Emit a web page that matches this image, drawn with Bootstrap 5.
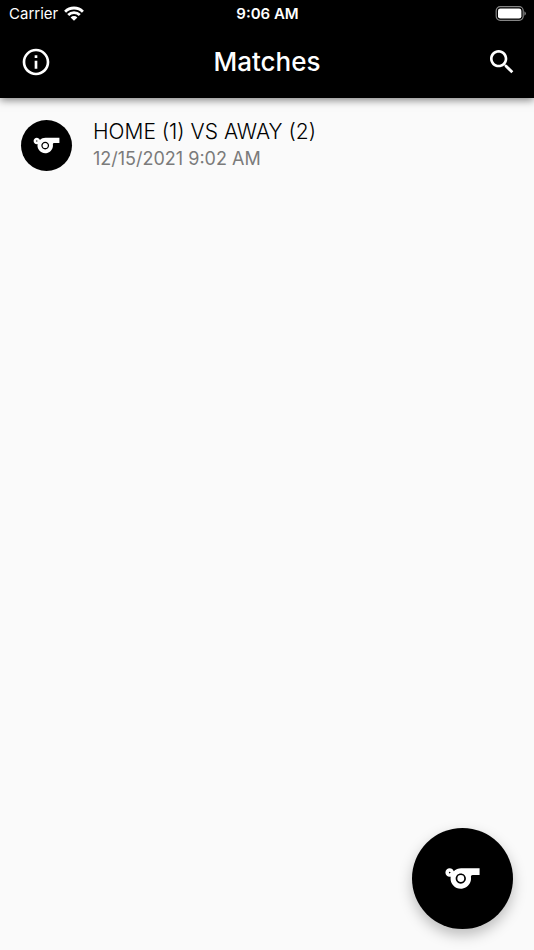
<!DOCTYPE html>
<html lang="en">
<head>
<meta charset="utf-8">
<meta name="viewport" content="width=device-width, initial-scale=1">
<title>Matches</title>
<link href="https://cdn.jsdelivr.net/npm/bootstrap@5.3.0/dist/css/bootstrap.min.css" rel="stylesheet">
<style>
body { background: #fafafa; font-family: Inter, "Liberation Sans", sans-serif; color: #212121; }
svg { display: block; fill: currentColor; }
.app-header { background: #000; color: #fff; box-shadow: 0 2px 8px rgba(0,0,0,.5); }
.status-bar { height: 27px; padding: 0 8px; font-size: 15px; line-height: 27px; }
.carrier { padding-left: 1px; }
.status-time { font-weight: 600; }
.app-bar { height: 71px; padding: 0 12px 2px; }
.app-title { font-size: 26px; line-height: 30px; font-weight: 500; }
.icon-btn { width: 40px; height: 40px; color: #fff; border: 0; }
.icon-btn-wide { width: 48px; }
.match-item { padding: 20px 21px; gap: 21px; color: #000; }
.avatar { width: 51px; height: 51px; background: #000; color: #fff; }
.match-name { font-size: 21px; line-height: 28px; font-weight: 300; }
.match-date { font-size: 18px; line-height: 26px; color: #7b7b7b; }
.fab { width: 101px; height: 101px; margin: 21px; background: #000; color: #fff; border: 0; box-shadow: 0 6px 14px rgba(0,0,0,.25); }
</style>
<script src="https://cdn.jsdelivr.net/npm/bootstrap@5.3.0/dist/js/bootstrap.bundle.min.js" defer></script>
</head>
<body>
<svg class="d-none" aria-hidden="true">
  <symbol id="whistle" viewBox="0 0 24 24">
    <path d="M11.23,6c-1.66,0-3.22,0.66-4.36,1.73C6.54,6.73,5.61,6,4.5,6C3.12,6,2,7.12,2,8.5S3.12,11,4.5,11c0.21,0,0.41-0.03,0.61-0.08c-0.05,0.25-0.09,0.51-0.1,0.78c-0.18,3.68,2.95,6.68,6.68,6.27c2.55-0.28,4.68-2.26,5.19-4.77c0.15-0.71,0.15-1.4,0.06-2.06c-0.09-0.6,0.38-1.13,0.99-1.13H22V6H11.23z M4.5,9C4.22,9,4,8.78,4,8.5S4.22,8,4.5,8S5,8.22,5,8.5S4.78,9,4.5,9z M11,15c-1.66,0-3-1.34-3-3s1.34-3,3-3s3,1.34,3,3S12.66,15,11,15z"/>
    <circle cx="11" cy="12" r="2"/>
  </symbol>
</svg>
<div class="d-flex flex-column min-vh-100">
  <header class="app-header">
    <div class="status-bar row g-0 align-items-center">
      <div class="carrier col d-flex align-items-center gap-1">
        <span>Carrier</span>
        <svg width="23" height="16" viewBox="0 0 23 16" role="img" aria-label="Wi-Fi"><g fill="none" stroke="currentColor" stroke-width="2.8"><path d="M3.1 5.7a12.6 12.6 0 0 1 17.8 0"/><path d="M6.2 9.1a8.2 8.2 0 0 1 11.6 0"/></g><path d="M12 14.7L8.6 11.4a4.8 4.8 0 0 1 6.8 0z"/></svg>
      </div>
      <div class="col-auto status-time">9:06 AM</div>
      <div class="col d-flex justify-content-end">
        <svg width="31" height="15" viewBox="0 0 31 15" role="img" aria-label="Battery full"><rect x="1.2" y=".7" width="27" height="13.6" rx="4" fill="none" stroke="#858585" stroke-width="1.2"/><rect x="3" y="2.5" width="23.4" height="10" rx="2.3"/><path d="M29.4 5.2q1.5.7 1.5 2.3t-1.5 2.3z" fill="#858585"/></svg>
      </div>
    </div>
    <nav class="app-bar row g-0 align-items-center" aria-label="Main">
      <div class="col">
        <button type="button" class="icon-btn icon-btn-wide btn p-0 d-flex align-items-center justify-content-center" aria-label="About">
          <svg width="32" height="32" viewBox="0 0 24 24"><path d="M11 7h2v2h-2zm0 4h2v6h-2zm1-9C6.48 2 2 6.48 2 12s4.48 10 10 10 10-4.48 10-10S17.52 2 12 2zm0 18c-4.41 0-8-3.59-8-8s3.59-8 8-8 8 3.59 8 8-3.59 8-8 8z"/></svg>
        </button>
      </div>
      <h1 class="app-title col-auto m-0">Matches</h1>
      <div class="col d-flex justify-content-end">
        <button type="button" class="icon-btn btn p-0 d-flex align-items-center justify-content-center" aria-label="Search">
          <svg width="32" height="32" viewBox="0 0 24 24"><path d="M15.5 14h-.79l-.28-.27C15.41 12.59 16 11.11 16 9.5 16 5.91 13.09 3 9.5 3S3 5.91 3 9.5 5.91 16 9.5 16c1.61 0 3.09-.59 4.23-1.57l.27.28v.79l5 4.99L20.49 19l-4.99-5zm-6 0C7.01 14 5 11.99 5 9.5S7.01 5 9.5 5 14 7.01 14 9.5 11.99 14 9.5 14z"/></svg>
        </button>
      </div>
    </nav>
  </header>
  <main class="flex-grow-1">
    <a href="#match" class="match-item d-flex align-items-center text-decoration-none">
      <span class="avatar rounded-circle d-flex align-items-center justify-content-center flex-shrink-0"><svg width="31" height="31" aria-hidden="true"><use href="#whistle"/></svg></span>
      <span class="d-flex flex-column">
        <span class="match-name">HOME (1) VS AWAY (2)</span>
        <span class="match-date">12/15/2021 9:02 AM</span>
      </span>
    </a>
  </main>
  <footer class="d-flex justify-content-end sticky-bottom">
    <button type="button" class="fab btn p-0 rounded-circle d-flex align-items-center justify-content-center" aria-label="New match"><svg width="41" height="41" aria-hidden="true"><use href="#whistle"/></svg></button>
  </footer>
</div>
</body>
</html>
